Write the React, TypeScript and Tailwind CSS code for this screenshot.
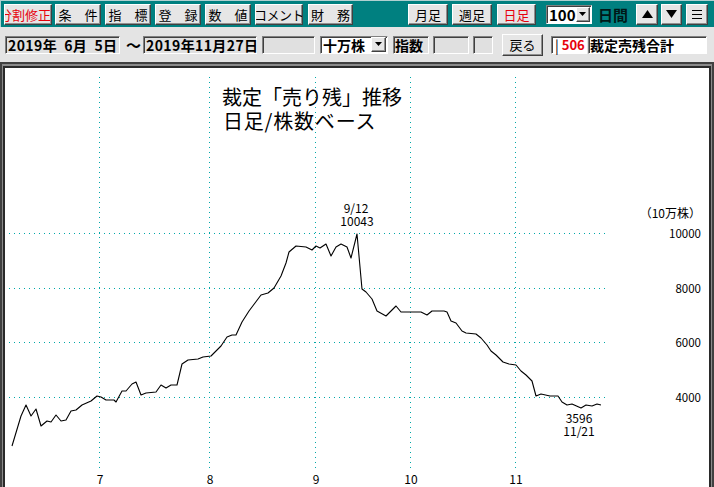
import React from "react"

const raised =
  "border border-t-white border-l-white border-r-[#404040] border-b-[#404040] shadow-[inset_-1px_-1px_0_#909090] bg-[#e6e6e6]"
const sunken =
  "border border-t-[#808080] border-l-[#808080] border-r-white border-b-white shadow-[inset_1px_1px_0_#404040]"

const font = { fontFamily: '"Noto Sans CJK JP", "Noto Sans", sans-serif' }

function Btn({ className = "", children }: { className?: string; children: React.ReactNode }) {
  return (
    <div className={`${raised} flex items-center justify-center overflow-hidden whitespace-pre text-[13px] leading-none text-black ${className}`}>
      {children}
    </div>
  )
}

function Arrow() {
  return (
    <div className={`${raised} w-[15px] h-[15px] flex items-center justify-center`}>
      <svg width="8" height="5" viewBox="0 0 8 5">
        <path d="M0 0h7l-3.5 4z" fill="#000" />
      </svg>
    </div>
  )
}

const points = [
  [13, 448], [22, 418], [27, 407], [32, 418], [37, 411], [42, 428], [48, 423], [52, 424], [57, 417], [62, 423],
  [67, 422], [72, 413], [77, 412], [83, 407], [92, 403], [98, 398], [102, 399], [107, 402], [115, 402], [117, 404],
  [123, 393], [127, 393], [133, 386], [137, 384], [142, 397], [147, 395], [157, 394], [162, 387], [167, 390], [172, 387],
  [178, 387], [183, 366], [189, 362], [199, 361], [204, 359], [212, 358], [222, 348], [228, 339], [233, 337], [237, 337],
  [243, 324], [250, 313], [256, 305], [262, 297], [269, 295], [275, 290], [282, 278], [287, 265], [290, 254], [297, 248],
  [307, 249], [313, 252], [317, 248], [321, 250], [327, 246], [332, 258], [337, 249], [342, 246], [348, 249], [352, 260],
  [358, 236], [363, 291], [367, 294], [373, 301], [378, 313], [387, 318], [393, 312], [397, 308], [402, 314], [422, 314],
  [428, 317], [433, 313], [445, 313], [448, 314], [452, 323], [457, 325], [463, 333], [467, 335], [477, 336], [482, 340],
  [488, 347], [492, 353], [497, 357], [504, 364], [510, 366], [517, 367], [522, 373], [527, 377], [533, 383], [537, 398],
  [542, 396], [551, 398], [559, 398], [563, 404], [568, 407], [573, 406], [582, 410], [587, 407], [593, 408], [598, 406],
  [602, 407],
]

const vLines = [
  { x: 100, label: "7" },
  { x: 210, label: "8" },
  { x: 316, label: "9" },
  { x: 411, label: "10" },
  { x: 516, label: "11" },
]
const hLines = [
  { y: 235, label: "10000" },
  { y: 290, label: "8000" },
  { y: 344, label: "6000" },
  { y: 399, label: "4000" },
]

function Chart() {
  const grid = "#00a8a8"
  return (
    <svg width="702" height="420" viewBox="6 70 702 420" className="block" style={font}>
      {vLines.map((v) => (
        <g key={v.x}>
          <line x1={v.x + 0.5} y1={79} x2={v.x + 0.5} y2={471} stroke={grid} strokeDasharray="1 4" />
          <text x={v.x + 1} y={486} fontSize="12" textAnchor="middle" fill="#000">
            {v.label}
          </text>
        </g>
      ))}
      {hLines.map((h) => (
        <g key={h.y}>
          <line x1={10} y1={h.y + 0.5} x2={607} y2={h.y + 0.5} stroke={grid} strokeDasharray="1 4" />
          <text x={702} y={h.y + 5} fontSize="11.5" textAnchor="end" fill="#000">
            {h.label}
          </text>
        </g>
      ))}
      <text x={702} y={220} fontSize="12" textAnchor="end" fill="#000">
        （10万株）
      </text>
      <text x={223} y={107} fontSize="20" fill="#000">
        裁定「売り残」推移
      </text>
      <text x={224} y={131} fontSize="20" fill="#000" letterSpacing="0.8">
        日足/株数ベース
      </text>
      <text x={357} y={215} fontSize="12" textAnchor="middle" fill="#000">
        9/12
      </text>
      <text x={358} y={228} fontSize="12" textAnchor="middle" fill="#000">
        10043
      </text>
      <text x={580} y={425} fontSize="12" textAnchor="middle" fill="#000">
        3596
      </text>
      <text x={580} y={438} fontSize="12" textAnchor="middle" fill="#000">
        11/21
      </text>
      <polyline
        points={points.map((p) => p.join(",")).join(" ")}
        fill="none"
        stroke="#000"
        strokeWidth="1.1"
        strokeLinejoin="round"
      />
    </svg>
  )
}

export default function App() {
  return (
    <div className="w-[714px] h-[487px] overflow-hidden bg-[#e4e4e4]" style={font}>
      {/* top toolbar */}
      <div className="h-[27px] bg-[#008080] flex items-center border-l border-t border-[#b0d0d0]">
        <Btn className="w-[48px] h-[21px] ml-[3px] justify-end text-red-600">分割修正</Btn>
        <Btn className="w-[46px] h-[21px] ml-[3px]">条　件</Btn>
        <Btn className="w-[46px] h-[21px] ml-[4px]">指　標</Btn>
        <Btn className="w-[46px] h-[21px] ml-[4px]">登　録</Btn>
        <Btn className="w-[46px] h-[21px] ml-[4px]">数　値</Btn>
        <Btn className="w-[48px] h-[21px] ml-[4px] text-[12px] tracking-[-0.5px]">コメント</Btn>
        <Btn className="w-[45px] h-[21px] ml-[5px]">財　務</Btn>
        <Btn className="w-[40px] h-[21px] ml-[55px]">月足</Btn>
        <Btn className="w-[40px] h-[21px] ml-[4px]">週足</Btn>
        <Btn className="w-[39px] h-[21px] ml-[5px] text-red-600">日足</Btn>
        <div className={`${sunken} ml-[10px] w-[46px] h-[19px] bg-white flex items-center justify-between pl-[2px] pr-[1px]`}>
          <span className="text-[15px] font-bold leading-none">100</span>
          <Arrow />
        </div>
        <span className="ml-[6px] text-[15px] font-bold text-[#001818] leading-none">日間</span>
        <Btn className="w-[22px] h-[21px] ml-[8px]">
          <svg width="11" height="8" viewBox="0 0 11 8"><path d="M5.5 0L11 8H0z" fill="#000" /></svg>
        </Btn>
        <Btn className="w-[21px] h-[21px] ml-[3px]">
          <svg width="11" height="8" viewBox="0 0 11 8"><path d="M0 0h11L5.5 8z" fill="#000" /></svg>
        </Btn>
        <Btn className="w-[22px] h-[21px] ml-[4px]">
          <svg width="10" height="9" viewBox="0 0 10 9"><path d="M0 0.5h10M0 4.5h10M0 8.5h10" stroke="#000" /></svg>
        </Btn>
      </div>

      {/* second row */}
      <div className="h-[35px] flex items-center text-black">
        <div className={`${sunken} ml-[5px] w-[115px] h-[18px] bg-[#e0e0e0] flex items-center pl-[2px] text-[14px] font-bold whitespace-pre leading-none tracking-[0.4px]`}>
          2019年  6月  5日
        </div>
        <span className="ml-[4px] w-[19px] text-center text-[15px] font-bold leading-none">〜</span>
        <div className={`${sunken} w-[114px] h-[18px] bg-[#e0e0e0] flex items-center pl-[2px] text-[14px] font-bold whitespace-pre leading-none tracking-[0.4px]`}>
          2019年11月27日
        </div>
        <div className={`${sunken} ml-[5px] w-[53px] h-[18px] bg-[#e0e0e0]`} />
        <div className={`${sunken} ml-[5px] w-[68px] h-[18px] bg-white flex items-center justify-between pl-[2px] pr-[1px]`}>
          <span className="text-[14px] font-bold leading-none">十万株</span>
          <Arrow />
        </div>
        <div className={`${sunken} ml-[5px] w-[36px] h-[18px] bg-[#e0e0e0] flex items-center pl-[1px] text-[14px] font-bold leading-none`}>
          指数
        </div>
        <div className={`${sunken} ml-[4px] w-[36px] h-[18px] bg-[#e0e0e0]`} />
        <div className={`${sunken} ml-[4px] w-[20px] h-[18px] bg-[#e0e0e0]`} />
        <Btn className="w-[41px] h-[22px] ml-[9px]">戻る</Btn>
        <div className={`${sunken} ml-[8px] w-[36px] h-[18px] bg-white flex items-center pl-[3px] text-[14px] leading-none whitespace-pre`}>
          <span>|</span>
          <span className="ml-[3px] text-[13px] font-bold text-red-600">506</span>
        </div>
        <div className={`${sunken} ml-[1px] w-[119px] h-[18px] bg-white flex items-center pl-[1px] text-[14px] font-bold leading-none`}>
          裁定売残合計
        </div>
      </div>

      {/* chart panel */}
      <div className="border-2 border-[#404040] bg-[#8a8a8a] pt-[2px] pl-px pr-px">
        <div className="border-2 border-[#2a2a2a] bg-white">
          <Chart />
        </div>
      </div>
    </div>
  )
}
